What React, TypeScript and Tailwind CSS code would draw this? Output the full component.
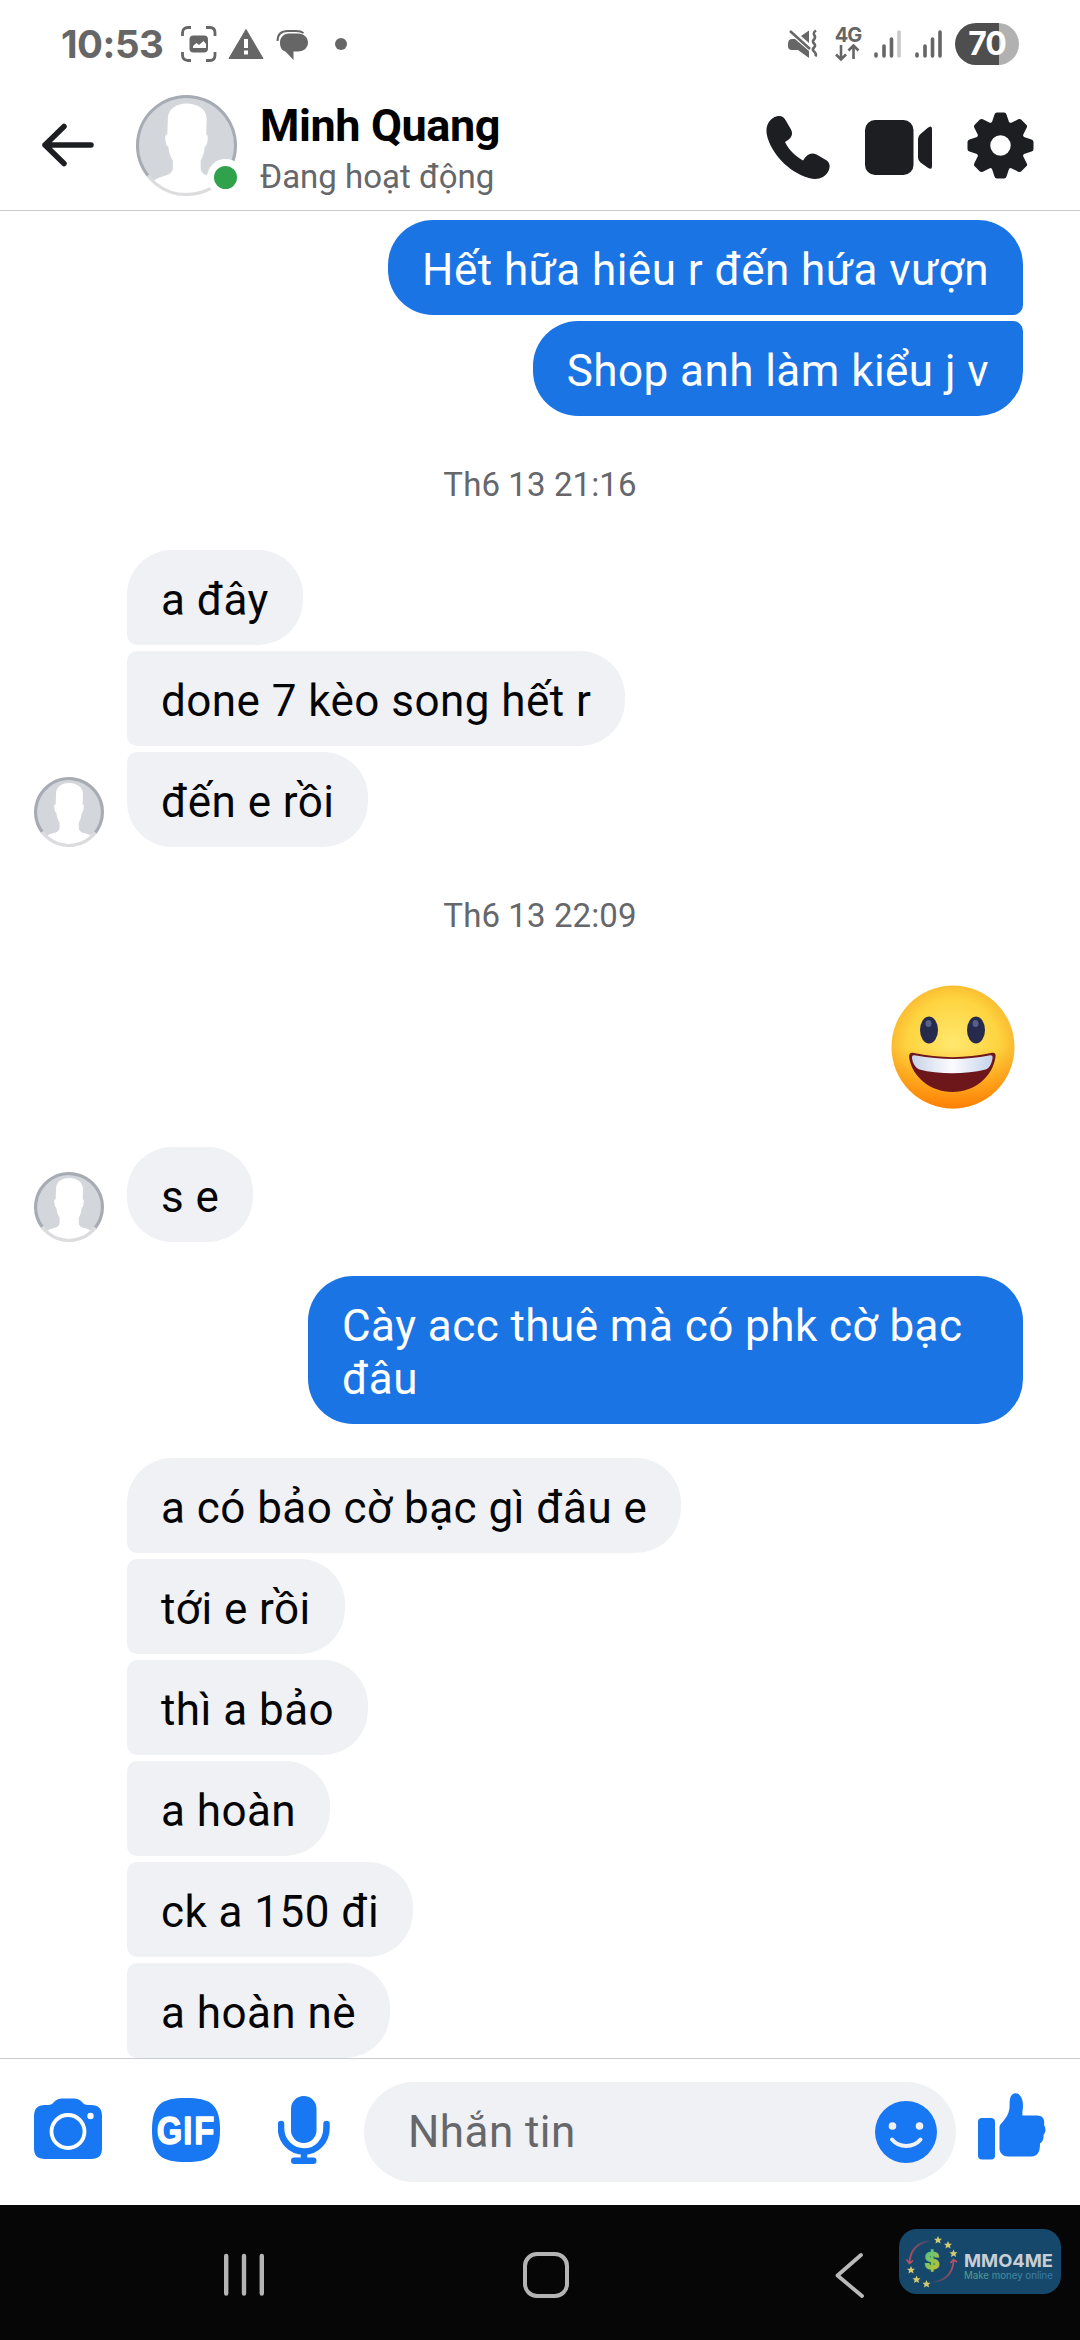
import { useId } from 'react'

type TextMessage = {
  text: string
  shape: 'single' | 'first' | 'middle' | 'last'
}

const MORNING: TextMessage[] = [
  { text: 'Hết hữa hiêu r đến hứa vượn', shape: 'middle' },
  { text: 'Shop anh làm kiểu j v', shape: 'last' },
]

const EVENING: TextMessage[] = [
  { text: 'a đây', shape: 'first' },
  { text: 'done 7 kèo song hết r', shape: 'middle' },
  { text: 'đến e rồi', shape: 'last' },
]

const NIGHT: TextMessage[] = [
  { text: 'a có bảo cờ bạc gì đâu e', shape: 'first' },
  { text: 'tới e rồi', shape: 'middle' },
  { text: 'thì a bảo', shape: 'middle' },
  { text: 'a hoàn', shape: 'middle' },
  { text: 'ck a 150 đi', shape: 'middle' },
  { text: 'a hoàn nè', shape: 'middle' },
]

const INCOMING_SHAPE = {
  single: '',
  first: 'rounded-bl-[10px]',
  middle: 'rounded-l-[10px]',
  last: 'rounded-tl-[10px]',
}

const OUTGOING_SHAPE = {
  single: '',
  first: 'rounded-br-[10px]',
  middle: 'rounded-br-[10px]',
  last: 'rounded-tr-[10px]',
}

function Avatar({ className, ring }: { className: string; ring: number }) {
  const id = useId()
  return (
    <svg viewBox="0 0 100 100" className={className}>
      <defs>
        <clipPath id={`${id}c`}>
          <circle cx="50" cy="50" r="50" />
        </clipPath>
      </defs>
      <g clipPath={`url(#${id}c)`}>
        <rect width="100" height="100" fill="#d3d6db" />
        <path
          d="M50 8.500C41 8.500 31.500 13 31.500 24L31 39C29 39 28.500 41 29 44L30 49Q30.500 51 32 51C32.500 57 34 61 36.500 65V72C36.500 78 31 79 27 80.500 21 82.500 16 85 12 88V100H88V88C84 85 79 82.500 73 80.500 69 79 64 78 64 72V65C66.500 61 67.500 57 68 51Q69.500 51 70 49L71 44C71.500 41 71 39 69.500 39L70 24C70 13 59 8.500 50 8.500z"
          fill="#fff"
        />
      </g>
      <circle cx="50" cy="50" r={50 - ring / 2} fill="none" stroke="#5f6670" strokeOpacity=".38" strokeWidth={ring} strokeDasharray="214 400" transform="rotate(142 50 50)" />
      <circle cx="50" cy="50" r={50 - ring / 2} fill="none" stroke="#dcdcde" strokeWidth={ring} strokeDasharray="88 400" transform="rotate(38 50 50)" />
    </svg>
  )
}

function Incoming({ messages, avatar }: { messages: TextMessage[]; avatar?: boolean }) {
  return (
    <div className="flex items-end pl-[34px]">
      <div className="mr-[23px] size-[70px] shrink-0">{avatar && <Avatar className="size-[70px]" ring={4.5} />}</div>
      <div className="flex flex-col items-start gap-1.5">
        {messages.map((m) => (
          <div
            key={m.text}
            className={`h-[95px] rounded-[45px] bg-[#f0f1f5] pt-6 pr-[34px] pl-[34px] whitespace-nowrap text-[#050505] ${INCOMING_SHAPE[m.shape]}`}
          >
            {m.text}
          </div>
        ))}
      </div>
    </div>
  )
}

function Outgoing({ messages }: { messages: TextMessage[] }) {
  return (
    <div className="flex flex-col items-end gap-1.5 pr-[57px]">
      {messages.map((m) => (
        <div
          key={m.text}
          className={`max-w-[715px] rounded-[45px] bg-[#1b74e4] pt-6 pr-[34px] pb-[18px] pl-[34px] text-white ${OUTGOING_SHAPE[m.shape]}`}
        >
          {m.text}
        </div>
      ))}
    </div>
  )
}

function Timestamp({ children }: { children: string }) {
  return <div className="text-center text-[33px] leading-10 tracking-[0.1px] text-[#65676b]">{children}</div>
}

function StatusBar() {
  return (
    <div className="flex h-[88px] items-center pr-[61px] pl-[61px] text-[#666]">
      <span className="w-[102px] font-['Inter'] text-[38.500px] leading-none font-bold tracking-[-0.5px]">10:53</span>
      <svg viewBox="0 0 36 36" className="ml-[18px] size-9">
        <path d="M1.500 10V7Q1.500 1.500 7 1.500h3M25 1.500h4Q34 1.500 34 7v3M34 26v3q0 5.500-5 5.500h-4M10 34.500H7q-5.500 0-5.500-5.500v-3" fill="none" stroke="currentColor" strokeWidth="2.800" />
        <rect x="8.500" y="9.500" width="18.500" height="17" rx="4" fill="currentColor" />
        <path d="M12 22v-2l3.500-3 2.500 2 4.500-4 2.500 3v4z" fill="#fff" />
      </svg>
      <svg viewBox="0 0 36 32" className="ml-[11px] h-8 w-9">
        <path d="M18 1.500L35 30.500H1z" fill="currentColor" stroke="currentColor" strokeLinejoin="round" />
        <path d="M18 11v9M18 22.500v4" stroke="#fff" strokeWidth="4" />
      </svg>
      <svg viewBox="0 0 34 32" className="mt-0.5 ml-3 h-8 w-[34px]">
        <path d="M1.500 12C1.500 5 6 2 12 2h8q5 0 7.500 2" fill="none" stroke="currentColor" strokeWidth="2" />
        <path d="M13 4.500h9c6 0 10 4 10 9s-4 9-10 9h-4.500V31l-8-8.500C5.500 21.500 4 18 4 13.500c0-5 3.500-9 9-9z" fill="currentColor" />
      </svg>
      <span className="ml-[25px] size-3 rounded-full bg-current" />
      <div className="ml-auto flex items-center">
        <svg viewBox="0 0 30 30" className="h-[30px] w-[30px]">
          <path d="M0 15q0-5 4-5h3l14 12v7L10 21H4q-4 0-4-4zM13 7l8-5.500V14z" fill="currentColor" />
          <path d="M2 2l20 18" stroke="currentColor" strokeWidth="2.500" />
          <path d="M28 1.500c-6 4 2 5-2 9s4 4 0 8 4 4 1.500 9" fill="none" stroke="currentColor" strokeWidth="2.600" />
        </svg>
        <div className="ml-[16px] flex h-9 w-7 flex-col items-center">
          <span className="font-['Inter'] text-[20px] leading-[18px] font-bold tracking-[-1px]">4G</span>
          <svg viewBox="0 0 28 18" className="h-[18px] w-7">
            <path d="M7 1v14M2 10.500l5 5 5-5M19.500 15V2M14.500 6.500l5-5 5 5" fill="none" stroke="currentColor" strokeWidth="2.600" />
          </svg>
        </div>
        <svg viewBox="0 0 28 30" className="ml-[12px] h-[30px] w-7" stroke="currentColor" strokeWidth="3.600" strokeLinecap="round">
          <path d="M2 25v2M10 17v10M17.500 10v17" />
          <path d="M25 3v24" strokeOpacity=".36" />
        </svg>
        <svg viewBox="0 0 28 30" className="ml-[13px] h-[30px] w-7" stroke="currentColor" strokeWidth="3.600" strokeLinecap="round">
          <path d="M2 25v2M10 17v10M17.500 10v17M25 3v24" />
        </svg>
        <div className="ml-[12px] flex h-[42px] w-16 items-center justify-center rounded-full bg-linear-to-r from-[#4e4e4e] from-[69%] to-[#b1b1b1] to-[69%]">
          <span className="font-['Inter'] text-[32px] leading-none font-bold tracking-[-1px] text-white">70</span>
        </div>
      </div>
    </div>
  )
}

function Header() {
  return (
    <div className="flex h-[123px] items-start border-b border-[#cbcccf] text-[#1c1e21]">
      <svg viewBox="0 0 54 44" className="mt-[35px] ml-[41px] h-11 w-[54px]" fill="none" stroke="#1c1e21" strokeWidth="5.500" strokeLinecap="round" strokeLinejoin="round">
        <path d="M50 22H4M23 3.500L4 22l19 18.500" />
      </svg>
      <div className="relative mt-[7px] ml-[41px]">
        <Avatar className="size-[101px]" ring={3} />
        <span className="absolute top-[64px] left-[71px] size-[37px] rounded-full border-[7.500px] border-white bg-[#31a24c]" />
      </div>
      <div className="ml-[23px] flex flex-col">
        <span className="mt-[11px] text-[45px] leading-[54px] font-bold tracking-[-0.4px] text-black">Minh Quang</span>
        <span className="mt-[3px] text-[33px] leading-[42px] tracking-normal text-[#65676b]">Đang hoạt động</span>
      </div>
      <div className="mt-[24px] mr-[46px] ml-auto flex">
        <svg viewBox="0 0 64 66" className="mt-[3px] h-[66px] w-16" fill="currentColor">
          <path d="M11 1.200C15 .3 17.500 1.500 19.500 5l5.500 9.500c2.500 5 .5 9-6 12.500 4 8 10 14 18 18.500C41 39 45 37 50.500 39.500L60 45c4 2.500 4.500 6.500 2.500 11C59 63 51 65.500 43 63 22 57 4.500 37.500.8 19.500-.8 10.500 3.500 3 11 1.200z" />
        </svg>
        <svg viewBox="0 0 68 56" className="mt-[8px] ml-[35px] h-14 w-[68px]" fill="currentColor">
          <rect width="48.500" height="55" rx="10" />
          <path d="M53 19q0-3 2.500-5l7-6q4.500-3.500 4.500 1v37.500q0 4-4.500 1l-7-5q-2.500-2-2.500-5z" />
        </svg>
        <svg viewBox="-33.500 -33.500 67 67" className="ml-[34px] size-[67px]" fill="currentColor">
          <circle r="17.500" fill="none" stroke="currentColor" strokeWidth="14.500" />
          {[0, 45, 90, 135, 180, 225, 270, 315].map((angle) => (
            <path key={angle} transform={`rotate(${angle})`} d="M-9-22L-6-31Q-5.500-33-3.500-33H3.500Q5.500-33 6-31L9-22z" />
          ))}
        </svg>
      </div>
    </div>
  )
}

function Emoji() {
  return (
    <svg viewBox="0 0 124 124" className="mr-[65px] ml-auto block size-[124px]">
      <defs>
        <radialGradient id="face" cx=".5" cy=".48" r=".53">
          <stop offset="0" stopColor="#ffe86f" />
          <stop offset=".7" stopColor="#fed440" />
          <stop offset="1" stopColor="#f9b52c" />
        </radialGradient>
        <linearGradient id="chin" x1="0" y1="0" x2="0" y2="1">
          <stop offset=".5" stopColor="#ff8a00" stopOpacity="0" />
          <stop offset="1" stopColor="#ff7a00" stopOpacity=".9" />
        </linearGradient>
        <linearGradient id="teeth">
          <stop offset="0" stopColor="#c9d3e6" />
          <stop offset=".5" stopColor="#fbfcff" />
          <stop offset="1" stopColor="#c5d2ea" />
        </linearGradient>
      </defs>
      <circle cx="62" cy="62" r="61.500" fill="url(#face)" />
      <circle cx="62" cy="62" r="61.500" fill="url(#chin)" />
      <ellipse cx="38" cy="45" rx="9" ry="13.500" fill="#262a4d" />
      <ellipse cx="85" cy="45" rx="9" ry="13.500" fill="#262a4d" />
      <ellipse cx="37.500" cy="38.500" rx="3" ry="3.500" fill="#55618a" />
      <ellipse cx="84.500" cy="38.500" rx="3" ry="3.500" fill="#55618a" />
      <path d="M18 72c0-4 2-5 5-4 25 5.500 52 5.500 77 0 4-1 5 1 4.500 4-3 20-21 35-43 35S21 92 18 72z" fill="#6e171b" />
      <path d="M21 73c0-3 1-3 4-2.500 25 4.500 50 4.500 73 0 3-.5 4 0 3.500 3-.8 5-3 10-7 11-20 5-47 5-66 0-4-1.500-7-6.500-7.500-11.500z" fill="url(#teeth)" />
    </svg>
  )
}

function Composer() {
  return (
    <div className="flex h-[147px] items-start border-t border-[#cbcccf] bg-white text-[#1877f2]">
      <svg viewBox="0 0 68 62" className="mt-[39px] ml-[34px] h-[62px] w-[68px]">
        <path d="M11 7h3q4 0 6-3 3-3.500 8-3.500h12q5 0 8 3.500 2 3 6 3h3q11 0 11 11v32.500q0 10.500-11 10.500H11Q0 61 0 50.500V18Q0 7 11 7z" fill="currentColor" />
        <circle cx="34" cy="33.500" r="16.500" fill="none" stroke="#fff" strokeWidth="3.800" />
        <circle cx="56.500" cy="18" r="3.200" fill="#fff" />
      </svg>
      <svg viewBox="0 0 68 64" className="mt-[39px] ml-[50px] h-16 w-[68px] overflow-visible">
        <path d="M34 0c24 0 34 6 34 32S58 64 34 64 0 58 0 32 10 0 34 0z" fill="currentColor" />
        <text
          transform="scale(.84 1)"
          x="5.700 37.200 50.200"
          y="46"
          fill="#fff"
          stroke="#fff"
          strokeWidth="1.400"
          strokeLinejoin="round"
          className="font-['Liberation_Sans'] text-[39px] font-bold tracking-normal"
        >
          GIF
        </text>
      </svg>
      <svg viewBox="0 0 52 70" className="mt-[36px] ml-[58px] h-[70px] w-[52px]">
        <rect x="13" y="1" width="25.500" height="47" rx="12.700" fill="currentColor" />
        <path d="M3 29v4c0 13 10 23.500 23 23.500S48.500 46 48.500 33v-4M26 57v8" fill="none" stroke="currentColor" strokeWidth="6.500" strokeLinecap="round" />
        <rect x="13" y="62.500" width="25.500" height="6.500" rx="3.200" fill="currentColor" />
      </svg>
      <div className="mt-[23px] ml-[34px] flex h-[100px] w-[592px] items-center rounded-full bg-[#f0f1f5] pr-[19px] pl-[44px]">
        <span className="text-[44px] leading-none text-[#65676b]">Nhắn tin</span>
        <svg viewBox="0 0 62 62" className="ml-auto size-[62px]">
          <circle cx="31" cy="31" r="31" fill="currentColor" />
          <circle cx="17.500" cy="25" r="3.800" fill="#f0f1f5" />
          <circle cx="44.500" cy="25" r="3.800" fill="#f0f1f5" />
          <path d="M17 38.500c7 8.500 21.500 8.500 28.500 0" fill="none" stroke="#f0f1f5" strokeWidth="4" strokeLinecap="round" />
        </svg>
      </div>
      <svg viewBox="0 0 68 67" className="mt-[34px] ml-[22px] h-[67px] w-[68px]" fill="currentColor">
        <rect y="25" width="17" height="41.500" rx="4" />
        <path d="M36 .5c5-1.500 9 4 9 12 0 4-1 7-.5 10H59c6 0 8 4 7 9.500 2 3 2 7-.5 10 .5 4-1 7-3.500 8.500 0 8-2 13-9 13H30c-4.500 0-8.500-3.500-8.500-8V34c0-4 8-7 10-18.500.5-5.500-1-13 4.500-15z" />
      </svg>
    </div>
  )
}

const STARS = [
  [39, 11],
  [49, 16],
  [54.5, 24.5],
  [12, 41],
  [17.5, 50.5],
  [27.5, 55],
]

function Watermark() {
  return (
    <div className="absolute top-[24px] right-[19px] flex h-[65px] w-[162px] rounded-[18px] bg-[#16486b] tracking-normal">
      <svg viewBox="0 0 162 65" className="size-full">
        <defs>
          <linearGradient id="dollar" x1="0" y1="0" x2=".6" y2="1">
            <stop offset="0" stopColor="#3fc39a" />
            <stop offset="1" stopColor="#c3c32b" />
          </linearGradient>
          <linearGradient id="tagline">
            <stop offset="0" stopColor="#56a38b" />
            <stop offset="1" stopColor="#3674ae" />
          </linearGradient>
          <linearGradient id="arcLeft">
            <stop offset="0" stopColor="#b94b61" />
            <stop offset="1" stopColor="#b94b61" stopOpacity=".1" />
          </linearGradient>
          <linearGradient id="arcRight">
            <stop offset="0" stopColor="#b94b61" stopOpacity=".1" />
            <stop offset="1" stopColor="#b94b61" />
          </linearGradient>
        </defs>
        <path d="M31 12C18 13 11 22 10.500 34" fill="none" stroke="url(#arcLeft)" strokeWidth="1.800" />
        <path d="M34 53c13-1 20-10 20.500-21" fill="none" stroke="url(#arcRight)" strokeWidth="1.800" />
        <path d="M7.500 30.500l3 4 3.500-3M51.500 34l3-3.500 3.500 2.500" fill="none" stroke="#c54f61" strokeWidth="1.600" />
        {STARS.map(([x, y]) => (
          <path key={x} transform={`translate(${x} ${y})`} d="M0-4L1.200-1.300 4-1.200 1.900.8 2.600 3.500 0 2-2.500 3.500-1.900.8-4-1.200-1.200-1.300z" fill="#d5cb70" />
        ))}
        <text x="33" y="40" textAnchor="middle" fill="url(#dollar)" stroke="url(#dollar)" strokeWidth="1.200" className="font-['Inter'] text-[23px] font-bold">$</text>
        <text x="65" y="38" textLength="89" lengthAdjust="spacingAndGlyphs" fill="#c9ced4" className="font-['Inter'] text-[18px] font-bold">MMO4ME</text>
        <text x="65" y="50" textLength="89" lengthAdjust="spacingAndGlyphs" fill="url(#tagline)" className="font-['Inter'] text-[10px]">Make money online</text>
      </svg>
    </div>
  )
}

function NavBar() {
  return (
    <div className="relative flex h-[135px] items-start bg-[#060606] pt-[46px]">
      <svg viewBox="0 0 42 46" className="ml-[223px] h-[46px] w-[42px]" stroke="#b4b4b4" strokeWidth="4.400" strokeLinecap="round">
        <path d="M3.200 5v37.500M21 5v37.500M38.800 5v37.500" />
      </svg>
      <div className="mt-px ml-[258px] size-[46px] rounded-[14px] border-4 border-[#b4b4b4]" />
      <svg viewBox="0 0 30 48" className="ml-[265px] h-12 w-[30px]" fill="none" stroke="#b9b9b9" strokeWidth="3.800" strokeLinecap="round" strokeLinejoin="round">
        <path d="M27 4L3.500 24.500 28 45" />
      </svg>
      <Watermark />
    </div>
  )
}

export default function App() {
  return (
    <div className="flex h-[2340px] w-[1080px] flex-col overflow-hidden bg-white font-['Roboto',sans-serif] text-[44px] leading-[53px] tracking-[0.45px]">
      <StatusBar />
      <Header />
      <div className="flex h-[1847px] flex-col pt-[9px]">
        <Outgoing messages={MORNING} />
        <div className="pt-[49px] pb-[45px]">
          <Timestamp>Th6 13 21:16</Timestamp>
        </div>
        <Incoming messages={EVENING} avatar />
        <div className="pt-[49px] pb-[49px]">
          <Timestamp>Th6 13 22:09</Timestamp>
        </div>
        <Emoji />
        <div className="flex flex-col gap-[34px] pt-[38px]">
          <Incoming messages={[{ text: 's e', shape: 'single' }]} avatar />
          <Outgoing messages={[{ text: 'Cày acc thuê mà có phk cờ bạc đâu', shape: 'single' }]} />
          <Incoming messages={NIGHT} />
        </div>
      </div>
      <Composer />
      <NavBar />
    </div>
  )
}
